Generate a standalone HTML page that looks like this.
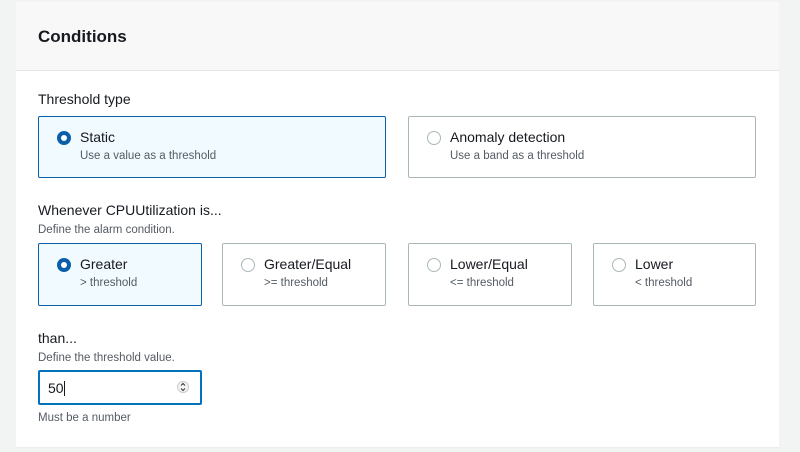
<!DOCTYPE html>
<html><head><style>
*{box-sizing:border-box;margin:0;padding:0}
body{width:800px;height:452px;background:#f2f3f3;font-family:"Liberation Sans",sans-serif;color:#16191f;position:relative;overflow:hidden}
.panel{position:absolute;left:16px;top:2px;width:763px;height:446px;background:#fff;border-bottom:1px solid #eaeded}
.hdr{height:69px;background:#f8f8f8;border-bottom:1px solid #e3e5e5}
.hdr h2{position:absolute;left:22px;top:25px;font-size:17px;font-weight:bold}
.t{position:absolute;font-size:14px}
.s{position:absolute;font-size:11.5px;color:#545b64}
.card{position:absolute;border:1px solid #aab7b8;border-radius:2px;background:#fff}
.card.on{border-color:#0a5fa8;background:#f1faff}
.card .r{position:absolute;left:18px;top:14px;width:14px;height:14px;border-radius:50%;border:1.5px solid #aab7b8;background:#fff}
.card.on .r{border:4px solid #0a5fa8}
.card .l{position:absolute;left:41px;top:12px;font-size:14px;font-weight:500}
.card .d{position:absolute;left:41px;top:33px;font-size:11.5px;color:#545b64}
.inp{position:absolute;left:38px;top:370px;width:164px;height:35px;border:2px solid #0073bb;border-radius:2px;background:#fff}
</style></head><body>
<div class="panel"><div class="hdr"><h2>Conditions</h2></div></div>
<div class="t" style="left:38px;top:91px">Threshold type</div>
<div class="card on" style="left:38px;top:116px;width:348px;height:62px"><div class="r"></div><div class="l">Static</div><div class="d">Use a value as a threshold</div></div>
<div class="card" style="left:408px;top:116px;width:348px;height:62px"><div class="r"></div><div class="l">Anomaly detection</div><div class="d">Use a band as a threshold</div></div>
<div class="t" style="left:38px;top:202px">Whenever CPUUtilization is...</div>
<div class="s" style="left:38px;top:224px">Define the alarm condition.</div>
<div class="card on" style="left:38px;top:243px;width:164px;height:63px"><div class="r"></div><div class="l">Greater</div><div class="d">&gt; threshold</div></div>
<div class="card" style="left:222px;top:243px;width:164px;height:63px"><div class="r"></div><div class="l">Greater/Equal</div><div class="d">&gt;= threshold</div></div>
<div class="card" style="left:408px;top:243px;width:164px;height:63px"><div class="r"></div><div class="l">Lower/Equal</div><div class="d">&lt;= threshold</div></div>
<div class="card" style="left:593px;top:243px;width:163px;height:63px"><div class="r"></div><div class="l">Lower</div><div class="d">&lt; threshold</div></div>
<div class="t" style="left:38px;top:330px">than...</div>
<div class="s" style="left:38px;top:352px">Define the threshold value.</div>
<div class="inp"><span style="position:absolute;left:8px;top:8px;font-size:14px">50<span style="display:inline-block;width:1px;height:15px;background:#16191f;vertical-align:-3px"></span></span>
<svg style="position:absolute;left:137px;top:6px" width="12" height="18" viewBox="0 0 12 18"><circle cx="6" cy="9" r="5.5" fill="#f4f4f4" stroke="#ccc"/><path d="M4 7.5l2-2 2 2M4 10.5l2 2 2-2" fill="none" stroke="#333" stroke-width="1"/></svg></div>
<div class="s" style="left:38px;top:412px">Must be a number</div>
</body></html>
